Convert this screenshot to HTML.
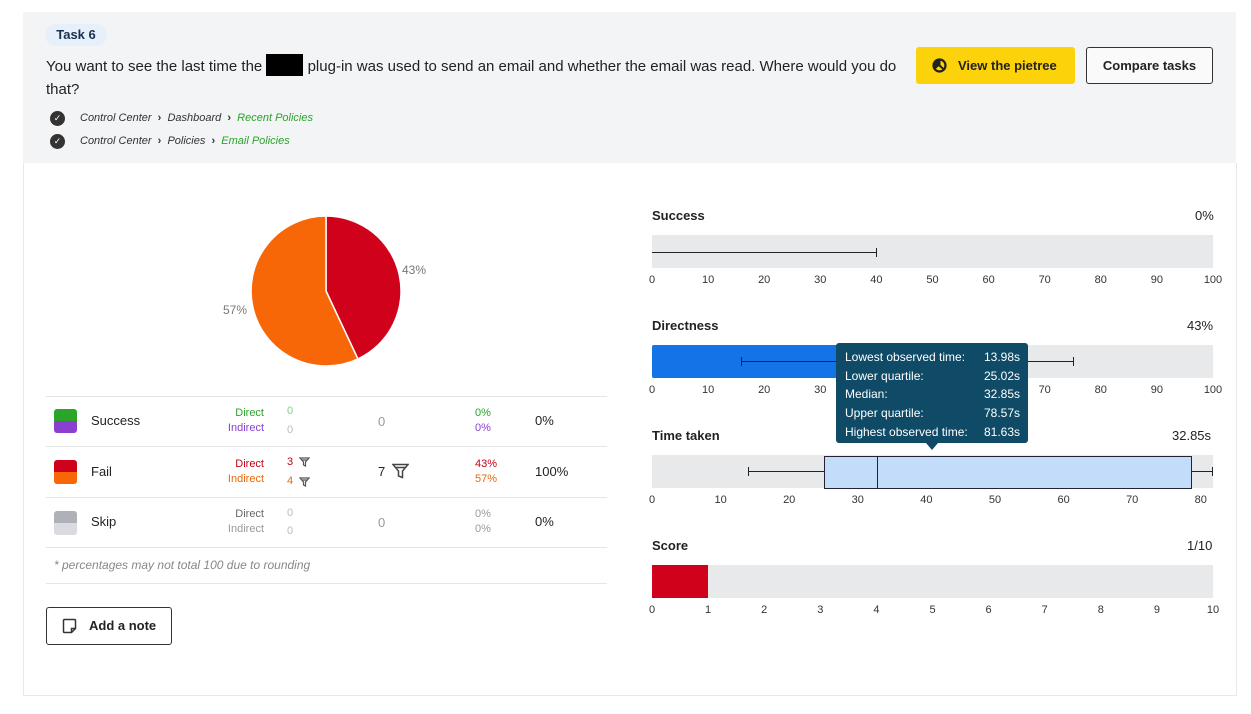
<!DOCTYPE html><html><head><style>
body{margin:0;width:1251px;height:714px;background:#fff;font-family:"Liberation Sans",sans-serif;position:relative;overflow:hidden;color:#222}
.a{position:absolute;white-space:nowrap}
.bc{font-size:11px;font-style:italic;color:#333}
.g{color:#2aa32a}
.lbl{font-size:13px;color:#222}
.ax{font-size:11px;color:#333}
.bar{position:absolute;left:652px;width:561px;height:33px;background:#e8e9eb}
.hl{position:absolute;left:46px;width:561px;height:1px;background:#e5e5e5}
.s{font-size:11px}
</style></head><body>
<div class="a" style="left:23px;top:12px;width:1213px;height:151px;background:#f3f4f6"></div>
<div class="a" style="left:23px;top:163px;width:1212px;height:532px;border:1px solid #e8e8e8;border-top:none"></div>
<div class="a" style="left:45px;top:24px;width:62px;height:22px;border-radius:11px;background:#e6f0fa;font-size:13px;font-weight:bold;color:#1a3050;line-height:22px;text-align:center">Task 6</div>
<div class="a" style="left:46px;top:54px;font-size:15px;color:#222;line-height:23px">You want to see the last time the <span style="display:inline-block;width:37px;height:22px;background:#000;vertical-align:-5px"></span> plug-in was used to send an email and whether the email was read. Where would you do<br>that?</div>
<div class="a" style="left:50px;top:111px;width:15px;height:15px;border-radius:50%;background:#333;color:#fff;font-size:9px;text-align:center;line-height:15px">✓</div>
<div class="a bc" style="left:80px;top:112px">Control Center &nbsp;<b style="font-style:normal">›</b>&nbsp; Dashboard &nbsp;<b style="font-style:normal">›</b>&nbsp; <span class="g">Recent Policies</span></div>
<div class="a" style="left:50px;top:134px;width:15px;height:15px;border-radius:50%;background:#333;color:#fff;font-size:9px;text-align:center;line-height:15px">✓</div>
<div class="a bc" style="left:80px;top:135px">Control Center &nbsp;<b style="font-style:normal">›</b>&nbsp; Policies &nbsp;<b style="font-style:normal">›</b>&nbsp; <span class="g">Email Policies</span></div>
<div class="a" style="left:916px;top:47px;width:159px;height:37px;background:#fcd20a;border-radius:3px;font-size:13px;font-weight:bold;line-height:37px"><svg style="position:absolute;left:16px;top:11px" width="15" height="15" viewBox="0 0 15 15"><circle cx="7.5" cy="7.5" r="6" fill="none" stroke="#222" stroke-width="2.2"/><path d="M7.5 1.5V7.5L12 11.5" fill="none" stroke="#222" stroke-width="2"/><path d="M7.5 7.5 L7.5 1.5 A6 6 0 0 0 3 11.5Z" fill="#222"/></svg><span style="position:absolute;left:42px">View the pietree</span></div>
<div class="a" style="left:1086px;top:47px;width:125px;height:35px;border:1px solid #333;border-radius:3px;background:#fafafa;font-size:13px;font-weight:bold;line-height:35px;text-align:center">Compare tasks</div>

<svg class="a" style="left:0;top:0" width="620" height="400">
<path d="M326 291 L326 216 A75 75 0 0 1 357.9 358.9 Z" fill="#d0021b" stroke="#fff" stroke-width="1.5"/>
<path d="M326 291 L357.9 358.9 A75 75 0 1 1 326 216 Z" fill="#f76707" stroke="#fff" stroke-width="1.5"/>
</svg>
<div class="a" style="left:402px;top:263px;font-size:12px;color:#777">43%</div>
<div class="a" style="left:223px;top:303px;font-size:12px;color:#777">57%</div>

<div class="hl" style="top:396px"></div><div class="hl" style="top:446px"></div><div class="hl" style="top:497px"></div><div class="hl" style="top:547px"></div><div class="hl" style="top:583px"></div>
<div class="a" style="left:54px;top:409px;width:23px;height:24px;border-radius:3px;overflow:hidden"><div style="height:12px;background:#2aa52a"></div><div style="height:12px;background:#8a3fd1"></div></div>
<div class="a" style="left:54px;top:460px;width:23px;height:24px;border-radius:3px;overflow:hidden"><div style="height:12px;background:#d0021b"></div><div style="height:12px;background:#f76707"></div></div>
<div class="a" style="left:54px;top:511px;width:23px;height:24px;border-radius:3px;overflow:hidden"><div style="height:12px;background:#aeb2b8"></div><div style="height:12px;background:#d9dbde"></div></div>
<div class="a lbl" style="left:91px;top:413px">Success</div>
<div class="a lbl" style="left:91px;top:464px">Fail</div>
<div class="a lbl" style="left:91px;top:514px">Skip</div>
<div class="a s" style="left:226px;top:407px;width:38px;text-align:right;color:#2aa32a">Direct</div>
<div class="a s" style="left:216px;top:422px;width:48px;text-align:right;color:#8a3fd1">Indirect</div>
<div class="a s" style="left:226px;top:458px;width:38px;text-align:right;color:#c0021b">Direct</div>
<div class="a s" style="left:216px;top:473px;width:48px;text-align:right;color:#e8680a">Indirect</div>
<div class="a s" style="left:226px;top:508px;width:38px;text-align:right;color:#666">Direct</div>
<div class="a s" style="left:216px;top:523px;width:48px;text-align:right;color:#999">Indirect</div>
<div class="a s" style="left:287px;top:405px;color:#8c8">0</div><div class="a s" style="left:287px;top:424px;color:#bbb">0</div>
<div class="a s" style="left:287px;top:456px;color:#c0021b">3</div><div class="a s" style="left:287px;top:475px;color:#e8680a">4</div>
<svg class="a" style="left:299px;top:457px" width="11" height="10" viewBox="0 0 11 10"><path d="M1 1H10L6.5 5V9L4.5 8V5Z M3 3H8" fill="none" stroke="#555" stroke-width="1.2"/></svg>
<svg class="a" style="left:299px;top:477px" width="11" height="10" viewBox="0 0 11 10"><path d="M1 1H10L6.5 5V9L4.5 8V5Z M3 3H8" fill="none" stroke="#555" stroke-width="1.2"/></svg>
<div class="a s" style="left:287px;top:507px;color:#bbb">0</div><div class="a s" style="left:287px;top:525px;color:#bbb">0</div>
<div class="a lbl" style="left:378px;top:414px;color:#999">0</div>
<div class="a lbl" style="left:378px;top:464px">7</div>
<svg class="a" style="left:392px;top:463px" width="17" height="16" viewBox="0 0 17 16"><path d="M1 1.5H16L10.5 8V14.5L6.5 13V8Z M4 4.5H13" fill="none" stroke="#444" stroke-width="1.5"/></svg>
<div class="a lbl" style="left:378px;top:515px;color:#999">0</div>
<div class="a s" style="left:475px;top:407px;color:#2aa32a">0%</div><div class="a s" style="left:475px;top:422px;color:#8a3fd1">0%</div>
<div class="a s" style="left:475px;top:458px;color:#c0021b">43%</div><div class="a s" style="left:475px;top:473px;color:#e8680a">57%</div>
<div class="a s" style="left:475px;top:508px;color:#999">0%</div><div class="a s" style="left:475px;top:523px;color:#999">0%</div>
<div class="a lbl" style="left:535px;top:413px">0%</div>
<div class="a lbl" style="left:535px;top:464px">100%</div>
<div class="a lbl" style="left:535px;top:514px">0%</div>
<div class="a" style="left:54px;top:558px;font-size:12px;font-style:italic;color:#888">* percentages may not total 100 due to rounding</div>
<div class="a" style="left:46px;top:607px;width:124px;height:36px;border:1px solid #333;border-radius:3px;font-size:13px;font-weight:bold;line-height:36px"><svg style="position:absolute;left:15px;top:10px" width="15" height="16" viewBox="0 0 15 16"><path d="M2.5 1.5H12.5Q13.5 1.5 13.5 2.5V10.5L9.5 14.5H2.5Q1.5 14.5 1.5 13.5V2.5Q1.5 1.5 2.5 1.5Z M13.5 10.5H9.5V14.5" fill="none" stroke="#333" stroke-width="1.5"/></svg><span style="position:absolute;left:42px">Add a note</span></div>

<div class="a lbl" style="left:652px;top:208px;font-weight:bold">Success</div><div class="a lbl" style="left:1195px;top:208px">0%</div>
<div class="bar" style="top:235px"></div>
<div class="a" style="left:652px;top:252px;width:224px;height:1px;background:#222"></div><div class="a" style="left:876px;top:248px;width:1px;height:9px;background:#222"></div>
<div class="a lbl" style="left:652px;top:318px;font-weight:bold">Directness</div><div class="a lbl" style="left:1187px;top:318px">43%</div>
<div class="bar" style="top:345px"></div>
<div class="a" style="left:652px;top:345px;width:241px;height:33px;background:#1473e6;border-radius:2px"></div>
<div class="a" style="left:741px;top:361px;width:332px;height:1px;background:#222"></div><div class="a" style="left:741px;top:357px;width:1px;height:9px;background:#222"></div><div class="a" style="left:1073px;top:357px;width:1px;height:9px;background:#222"></div>
<div class="a lbl" style="left:652px;top:428px;font-weight:bold">Time taken</div><div class="a lbl" style="left:1172px;top:428px">32.85s</div>
<div class="bar" style="top:455px"></div>
<div class="a" style="left:748px;top:471px;width:464px;height:1px;background:#222"></div><div class="a" style="left:748px;top:467px;width:1px;height:9px;background:#222"></div><div class="a" style="left:1212px;top:467px;width:1px;height:9px;background:#222"></div>
<div class="a" style="left:824px;top:456px;width:366px;height:31px;border:1px solid #223;background:#c3dcfa"></div>
<div class="a" style="left:877px;top:456px;width:1px;height:32px;background:#223"></div>
<div class="a lbl" style="left:652px;top:538px;font-weight:bold">Score</div><div class="a lbl" style="left:1187px;top:538px">1/10</div>
<div class="bar" style="top:565px"></div>
<div class="a" style="left:652px;top:565px;width:56px;height:33px;background:#d0021b"></div>
<div id="ax"></div>
<div class="a" style="left:836px;top:343px;width:192px;height:100px;background:#0f4a66;border-radius:3px;color:#fff;font-size:12px;line-height:18.7px;box-sizing:border-box">
<div style="position:absolute;left:9px;top:5px">Lowest observed time:<br>Lower quartile:<br>Median:<br>Upper quartile:<br>Highest observed time:</div>
<div style="position:absolute;right:8px;top:5px;text-align:right">13.98s<br>25.02s<br>32.85s<br>78.57s<br>81.63s</div>
</div>
<div class="a" style="left:926px;top:443px;width:0;height:0;border-left:6px solid transparent;border-right:6px solid transparent;border-top:7px solid #0f4a66"></div>
<script>
var h='';
function ax(y,vals,px){vals.forEach(function(v,i){var x=652+i*px;h+='<div class="a ax" style="left:'+(x-20)+'px;top:'+y+'px;width:40px;text-align:center">'+v+'</div>';});}
ax(274,[0,10,20,30,40,50,60,70,80,90,100],56.1);
ax(384,[0,10,20,30,'','','',70,80,90,100],56.1);
ax(494,[0,10,20,30,40,50,60,70,80],68.6);
ax(604,[0,1,2,3,4,5,6,7,8,9,10],56.1);
document.getElementById('ax').innerHTML=h;
</script>
</body></html>
